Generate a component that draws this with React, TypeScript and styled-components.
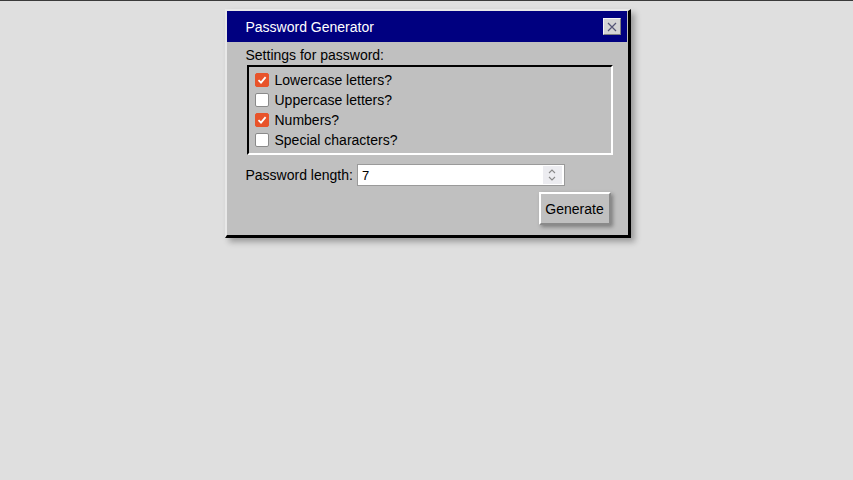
import styled, { createGlobalStyle } from "styled-components";

const GlobalStyle = createGlobalStyle`
  html, body {
    margin: 0;
    padding: 0;
    background: #dfdfdf;
    height: 100%;
  }
  body {
    border-top: 1px solid #3a3a3a;
    box-sizing: border-box;
    font-family: "Liberation Sans", Arial, sans-serif;
  }
`;

const Page = styled.div`
  display: flex;
  justify-content: center;
  padding-top: 8px;
  padding-left: 2px;
`;

const Window = styled.div`
  width: 406px;
  box-sizing: border-box;
  background: #c0c0c0;
  border-top: 2px solid #e8e8e8;
  border-left: 2px solid #e8e8e8;
  border-right: 3px solid #000;
  border-bottom: 3px solid #000;
  padding: 0 1px 0 0;
  box-shadow: 4px 4px 6px rgba(0, 0, 0, 0.3);
  color: #000;
`;

const TitleBar = styled.div`
  height: 31px;
  background: #000080;
  display: flex;
  align-items: center;
  justify-content: space-between;
  padding: 0 6px 0 19px;
  color: #fff;
  font-size: 14px;
`;

const CloseButton = styled.div`
  width: 18px;
  height: 17px;
  box-sizing: border-box;
  background: #d4d4d4;
  border-top: 1px solid #f4f4f4;
  border-left: 1px solid #f4f4f4;
  border-right: 1px solid #808080;
  border-bottom: 1px solid #808080;
  display: flex;
  align-items: center;
  justify-content: center;
`;

const Body = styled.div`
  padding: 4px 14px 10px 19px;
  font-size: 14px;
`;

const GroupLabel = styled.div`
  height: 19px;
  line-height: 19px;
`;

const Group = styled.div`
  margin-left: 1px;
  border-top: 2px solid #000;
  border-left: 2px solid #000;
  border-right: 2px solid #fff;
  border-bottom: 2px solid #fff;
  padding: 3px 0 3px 6px;
  display: flex;
  flex-direction: column;
`;

const OptionRow = styled.label`
  display: flex;
  align-items: center;
  gap: 6px;
  height: 20px;
`;

const Box = styled.span<{ $checked: boolean }>`
  width: 14px;
  height: 14px;
  box-sizing: border-box;
  border-radius: 2px;
  background: ${(p) => (p.$checked ? "#e8532a" : "#fff")};
  border: 1px solid ${(p) => (p.$checked ? "#e8532a" : "#8a8a8a")};
  display: flex;
  align-items: center;
  justify-content: center;
`;

const LengthRow = styled.div`
  display: flex;
  align-items: center;
  gap: 4px;
  margin-top: 9px;
`;

const NumberField = styled.div`
  width: 208px;
  height: 22px;
  box-sizing: border-box;
  background: #fff;
  border: 1px solid #9a9a9a;
  display: flex;
  align-items: center;
  justify-content: space-between;
  padding-left: 4px;
  font-size: 13px;
`;

const Spinner = styled.div`
  width: 19px;
  height: 18px;
  margin-right: 2px;
  background: #ececf0;
  display: flex;
  align-items: center;
  justify-content: center;
`;

const Actions = styled.div`
  display: flex;
  justify-content: flex-end;
  margin: 6px 2px 0 0;
`;

const Button = styled.button`
  width: 72px;
  height: 33px;
  box-sizing: border-box;
  background: #c0c0c0;
  font-family: "Liberation Sans", Arial, sans-serif;
  font-size: 14px;
  color: #000;
  border-top: 2px solid #fff;
  border-left: 2px solid #fff;
  border-right: 2px solid #8a8a8a;
  border-bottom: 2px solid #8a8a8a;
  box-shadow: 2px 2px 4px rgba(0, 0, 0, 0.35);
  padding: 0;
`;

const Check = () => (
  <svg width="10" height="10" viewBox="0 0 10 10">
    <path d="M1.5 5.2 L4 7.6 L8.6 2.2" fill="none" stroke="#fff" strokeWidth="1.8" />
  </svg>
);

const options = [
  { label: "Lowercase letters?", checked: true },
  { label: "Uppercase letters?", checked: false },
  { label: "Numbers?", checked: true },
  { label: "Special characters?", checked: false },
];

export default function App() {
  return (
    <>
      <GlobalStyle />
      <Page>
        <Window>
          <TitleBar>
            <span>Password Generator</span>
            <CloseButton>
              <svg width="10" height="10" viewBox="0 0 10 10">
                <path d="M1 1 L9 9 M9 1 L1 9" stroke="#555577" strokeWidth="1.2" />
              </svg>
            </CloseButton>
          </TitleBar>
          <Body>
            <GroupLabel>Settings for password:</GroupLabel>
            <Group>
              {options.map((o) => (
                <OptionRow key={o.label}>
                  <Box $checked={o.checked}>{o.checked && <Check />}</Box>
                  {o.label}
                </OptionRow>
              ))}
            </Group>
            <LengthRow>
              <span>Password length:</span>
              <NumberField>
                <span>7</span>
                <Spinner>
                  <svg width="10" height="14" viewBox="0 0 10 14">
                    <path d="M2 5 L5 2 L8 5 M2 9 L5 12 L8 9" fill="none" stroke="#8a8a8a" strokeWidth="1.1" />
                  </svg>
                </Spinner>
              </NumberField>
            </LengthRow>
            <Actions>
              <Button>Generate</Button>
            </Actions>
          </Body>
        </Window>
      </Page>
    </>
  );
}
